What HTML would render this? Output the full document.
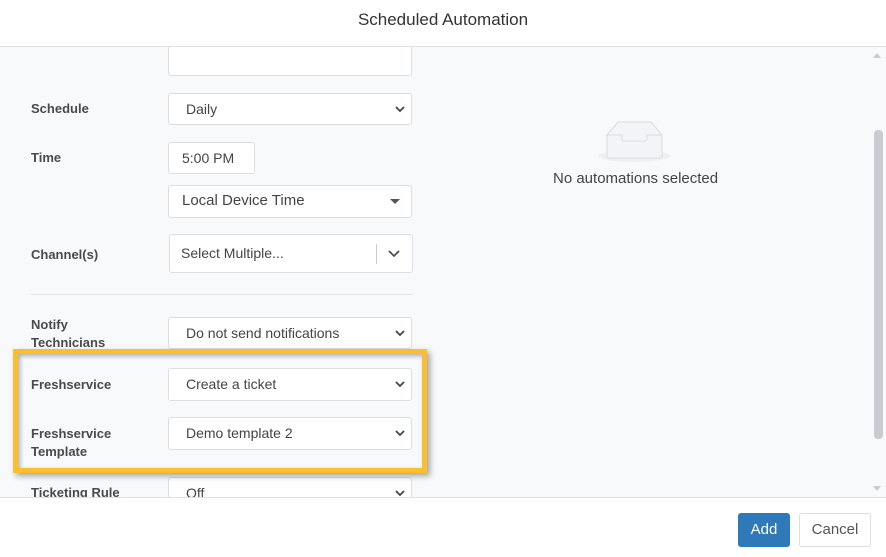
<!DOCTYPE html>
<html><head><style>
*{box-sizing:border-box;margin:0;padding:0}
body{width:886px;height:557px;overflow:hidden;font-family:"Liberation Sans",sans-serif;background:#fff;position:relative;color:#444}
.hdr{position:absolute;left:0;top:0;width:886px;height:47px;border-bottom:1px solid #dfe1e5;background:#fff;text-align:center;font-size:17px;line-height:40px;color:#333}
.body{position:absolute;left:0;top:47px;width:886px;height:450px;background:#f8f9fb;overflow:hidden}
.ftr{position:absolute;left:0;top:497px;width:886px;height:60px;background:#fff;border-top:1px solid #dfe1e5}
.lbl{position:absolute;left:31px;font-size:13px;font-weight:bold;color:#4a4a4a;line-height:18px}
.sel{position:absolute;left:168px;width:244px;height:32px;background:#fff;border:1px solid #dcdee2;border-radius:3px;font-size:14px;color:#444;padding-left:17px;line-height:30px}
.sel svg{position:absolute;right:6px;top:11px}
.btn{position:absolute;top:513px;height:34px;border-radius:3px;font-size:15px;text-align:center;line-height:32px}
</style></head><body>
<div class="hdr">Scheduled Automation</div>
<div class="body">
  <div class="sel" style="top:-12px;height:41px"></div>
  <div class="lbl" style="top:53px">Schedule</div>
  <div class="sel" style="top:46px">Daily<svg width="10" height="8"><path d="M1 2l4 4 4-4" stroke="#444" stroke-width="1.8" fill="none"/></svg></div>
  <div class="lbl" style="top:102px">Time</div>
  <div class="sel" style="top:95px;width:87px;padding-left:13px">5:00 PM</div>
  <div class="sel" style="top:138px;height:33px;padding-left:13px;font-size:15px">Local Device Time<svg width="12" height="8" style="right:10px;top:12px"><path d="M1 1h10l-5 5z" fill="#555"/></svg></div>
  <div class="lbl" style="top:199px">Channel(s)</div>
  <div class="sel" style="top:187px;left:169px;height:39px;padding-left:11px;line-height:37px">Select Multiple...<div style="position:absolute;left:206px;top:9px;width:1px;height:20px;background:#ccc"></div><svg width="12" height="8" style="right:12px;top:15px"><path d="M1 1l5 5 5-5" stroke="#444" stroke-width="1.6" fill="none"/></svg></div>
  <div style="position:absolute;left:31px;top:247px;width:382px;height:1px;background:#e3e5e8"></div>
  <div class="lbl" style="top:269px">Notify<br>Technicians</div>
  <div class="sel" style="top:270px">Do not send notifications<svg width="10" height="8"><path d="M1 2l4 4 4-4" stroke="#444" stroke-width="1.8" fill="none"/></svg></div>
  <div class="lbl" style="top:329px">Freshservice</div>
  <div class="sel" style="top:321px;height:33px">Create a ticket<svg width="10" height="8"><path d="M1 2l4 4 4-4" stroke="#444" stroke-width="1.8" fill="none"/></svg></div>
  <div class="lbl" style="top:378px">Freshservice<br>Template</div>
  <div class="sel" style="top:370px;height:33px">Demo template 2<svg width="10" height="8"><path d="M1 2l4 4 4-4" stroke="#444" stroke-width="1.8" fill="none"/></svg></div>
  <div class="lbl" style="top:437px">Ticketing Rule</div>
  <div class="sel" style="top:430px">Off<svg width="10" height="8"><path d="M1 2l4 4 4-4" stroke="#444" stroke-width="1.8" fill="none"/></svg></div>
  <div style="position:absolute;left:13px;top:302px;width:414px;height:124px;border:5px solid #fbbf2e;box-shadow:3px 3px 6px rgba(0,0,0,.35),inset 2px 2px 5px rgba(0,0,0,.3)"></div>
  <svg style="position:absolute;left:598px;top:64px" width="74" height="52"><ellipse cx="36" cy="45" rx="36" ry="6" fill="#eff0f3"/><path d="M9 24l11-13h33l11 13v21a2 2 0 0 1-2 2H11a2 2 0 0 1-2-2z" fill="#f3f4f8" stroke="#d9dbe0"/><path d="M9 24h15v4a2 2 0 0 0 2 2h21a2 2 0 0 0 2-2v-4h15" fill="none" stroke="#d9dbe0"/></svg>
  <div style="position:absolute;left:553px;top:123px;font-size:15px;color:#444">No automations selected</div>
  <svg style="position:absolute;left:872px;top:4px" width="10" height="8"><path d="M1 7l4-5 4 5z" fill="#c8cbd0"/></svg>
  <div style="position:absolute;left:874px;top:83px;width:9px;height:309px;background:#c8cbd0;border-radius:4px"></div>
  <svg style="position:absolute;left:872px;top:438px" width="10" height="8"><path d="M1 1l4 5 4-5z" fill="#c8cbd0"/></svg>
</div>
<div class="ftr"></div>
<div class="btn" style="left:738px;width:52px;background:#2f79b9;color:#fff;border:1px solid #2f79b9">Add</div>
<div class="btn" style="left:799px;width:72px;background:#fff;color:#555;border:1px solid #dcdee2">Cancel</div>
</body></html>
